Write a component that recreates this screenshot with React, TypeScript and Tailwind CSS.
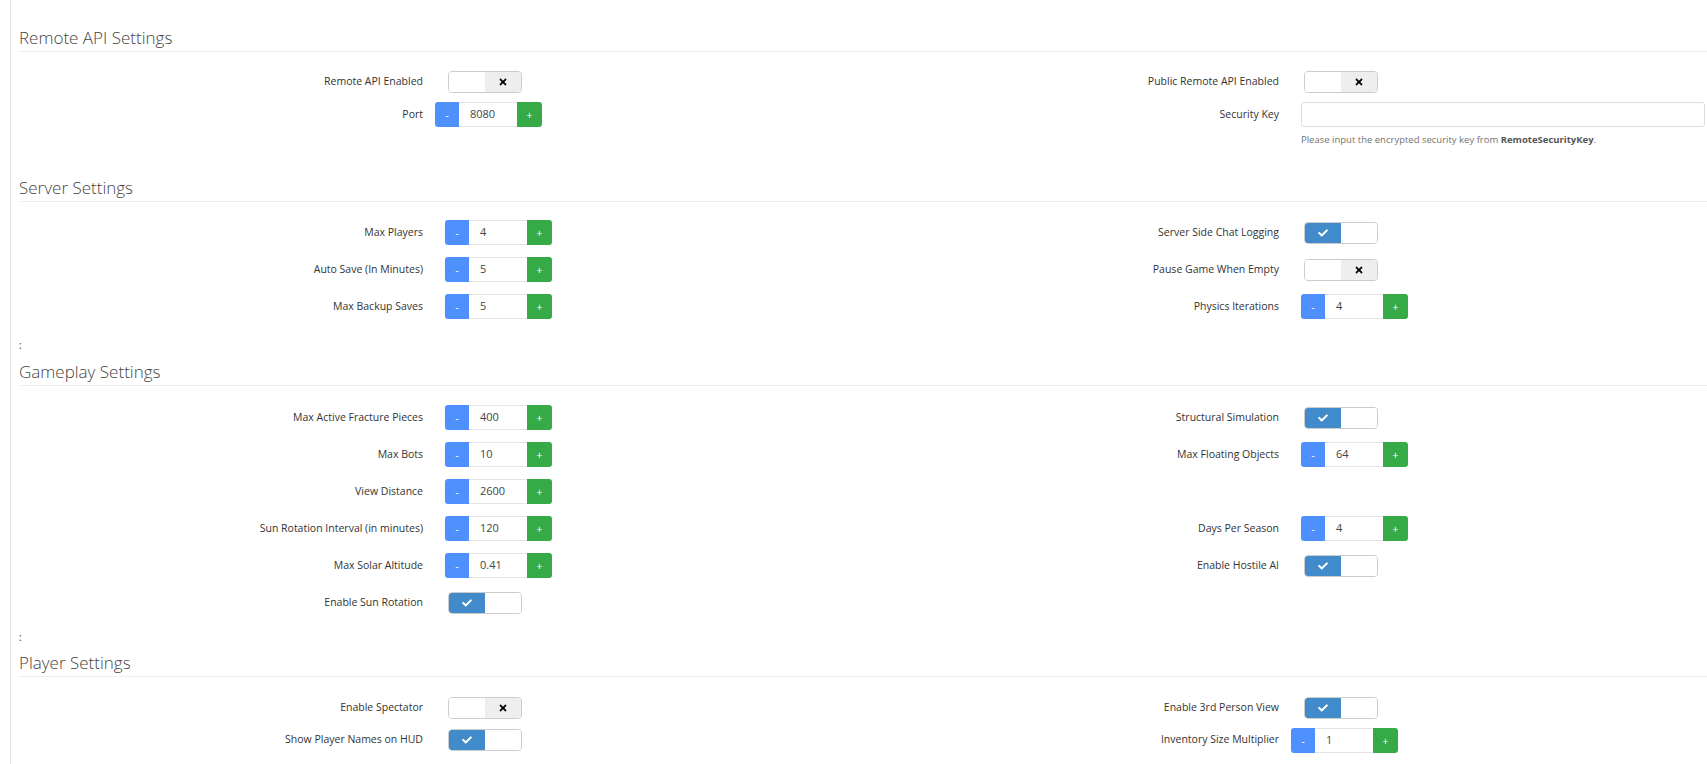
import React from "react";
import { FaCheck, FaTimes } from "react-icons/fa";

type Side = "left" | "right";

function Toggle({ on }: { on: boolean }) {
    return (
        <div className="ml-[25px] flex h-[22px] w-[74px] overflow-hidden rounded-[4px] border border-[#cccccc]">
            {on ? (
                <>
                    <span className="flex w-1/2 items-center justify-center bg-[#428bca] text-white">
                        <FaCheck size={10} />
                    </span>
                    <span className="w-1/2 bg-white" />
                </>
            ) : (
                <>
                    <span className="w-1/2 bg-white" />
                    <span className="flex w-1/2 items-center justify-center bg-[#eeeeee] text-black">
                        <FaTimes size={10} />
                    </span>
                </>
            )}
        </div>
    );
}

function Stepper({ value, compact = false }: { value: string; compact?: boolean }) {
    return (
        <div className={compact ? "ml-[12px] flex h-[25px]" : "ml-[22px] flex h-[25px]"}>
            <button className="w-[24px] rounded-l-[3px] bg-[#4d90fe] text-[11px] leading-none text-white">
                -
            </button>
            <input
                readOnly
                value={value}
                className="w-[58px] border-y border-[#e5e5e5] bg-white pl-[11px] text-[11px] text-[#444444] outline-none"
            />
            <button className="w-[25px] rounded-r-[3px] bg-[#35aa47] text-[11px] leading-none text-white">
                +
            </button>
        </div>
    );
}

function Row({
    label,
    side,
    height,
    children,
}: {
    label?: string;
    side: Side;
    height: string;
    children?: React.ReactNode;
}) {
    return (
        <div className={`flex items-center ${height}`}>
            <label
                className={
                    side === "left"
                        ? "w-[404px] shrink-0 text-right text-[10.5px] text-[#333333]"
                        : "w-[416px] shrink-0 text-right text-[10.5px] text-[#333333]"
                }
            >
                {label}
            </label>
            {children}
        </div>
    );
}

function Heading({ title }: { title: string }) {
    return (
        <h3 className="border-b border-[#eeeeee] pb-[2px] text-[17px] font-light leading-[22px] text-[#444444]">
            {title}
        </h3>
    );
}

export default function App() {
    return (
        <div className="min-h-screen bg-white font-['Open_Sans',sans-serif]">
            <div className="ml-[10px] min-h-[764px] border-l border-[#e5e5e5] pl-[8px] pt-[27px]">
                {/* Remote API */}
                <Heading title="Remote API Settings" />
                <div className="flex pt-[13px]">
                    <div className="w-[844px] shrink-0">
                        <Row side="left" height="h-[33px]" label="Remote API Enabled">
                            <Toggle on={false} />
                        </Row>
                        <Row side="left" height="h-[33px]" label="Port">
                            <Stepper value="8080" compact />
                        </Row>
                    </div>
                    <div className="flex-1">
                        <Row side="right" height="h-[33px]" label="Public Remote API Enabled">
                            <Toggle on={false} />
                        </Row>
                        <Row side="right" height="h-[33px]" label="Security Key">
                            <input
                                readOnly
                                className="ml-[22px] mr-[2px] h-[25px] flex-1 rounded-[3px] border border-[#dddddd] bg-white outline-none"
                            />
                        </Row>
                        <p className="mt-[2px] pl-[438px] text-[9.5px] leading-[13px] text-[#737373]">
                            Please input the encrypted security key from{" "}
                            <b className="font-bold text-[#555555]">RemoteSecurityKey</b>.
                        </p>
                    </div>
                </div>

                {/* Server */}
                <div className="mt-[31px]">
                    <Heading title="Server Settings" />
                </div>
                <div className="flex pt-[12px]">
                    <div className="w-[844px] shrink-0">
                        <Row side="left" height="h-[37px]" label="Max Players">
                            <Stepper value="4" />
                        </Row>
                        <Row side="left" height="h-[37px]" label="Auto Save (In Minutes)">
                            <Stepper value="5" />
                        </Row>
                        <Row side="left" height="h-[37px]" label="Max Backup Saves">
                            <Stepper value="5" />
                        </Row>
                    </div>
                    <div className="flex-1">
                        <Row side="right" height="h-[37px]" label="Server Side Chat Logging">
                            <Toggle on />
                        </Row>
                        <Row side="right" height="h-[37px]" label="Pause Game When Empty">
                            <Toggle on={false} />
                        </Row>
                        <Row side="right" height="h-[37px]" label="Physics Iterations">
                            <Stepper value="4" />
                        </Row>
                    </div>
                </div>
                <p className="mb-[10px] mt-[14px] text-[10px] leading-[12px] text-[#333333]">:</p>

                {/* Gameplay */}
                <Heading title="Gameplay Settings" />
                <div className="flex pt-[13px]">
                    <div className="w-[844px] shrink-0">
                        <Row side="left" height="h-[37px]" label="Max Active Fracture Pieces">
                            <Stepper value="400" />
                        </Row>
                        <Row side="left" height="h-[37px]" label="Max Bots">
                            <Stepper value="10" />
                        </Row>
                        <Row side="left" height="h-[37px]" label="View Distance">
                            <Stepper value="2600" />
                        </Row>
                        <Row side="left" height="h-[37px]" label="Sun Rotation Interval (in minutes)">
                            <Stepper value="120" />
                        </Row>
                        <Row side="left" height="h-[37px]" label="Max Solar Altitude">
                            <Stepper value="0.41" />
                        </Row>
                        <Row side="left" height="h-[37px]" label="Enable Sun Rotation">
                            <Toggle on />
                        </Row>
                    </div>
                    <div className="flex-1">
                        <Row side="right" height="h-[37px]" label="Structural Simulation">
                            <Toggle on />
                        </Row>
                        <Row side="right" height="h-[37px]" label="Max Floating Objects">
                            <Stepper value="64" />
                        </Row>
                        <Row side="right" height="h-[37px]" />
                        <Row side="right" height="h-[37px]" label="Days Per Season">
                            <Stepper value="4" />
                        </Row>
                        <Row side="right" height="h-[37px]" label="Enable Hostile AI">
                            <Toggle on />
                        </Row>
                    </div>
                </div>
                <p className="mb-[9px] mt-[10px] text-[10px] leading-[12px] text-[#333333]">:</p>

                {/* Player */}
                <Heading title="Player Settings" />
                <div className="flex pt-[15px]">
                    <div className="w-[844px] shrink-0">
                        <Row side="left" height="h-[32px]" label="Enable Spectator">
                            <Toggle on={false} />
                        </Row>
                        <Row side="left" height="h-[32px]" label="Show Player Names on HUD">
                            <Toggle on />
                        </Row>
                    </div>
                    <div className="flex-1">
                        <Row side="right" height="h-[32px]" label="Enable 3rd Person View">
                            <Toggle on />
                        </Row>
                        <Row side="right" height="h-[32px]" label="Inventory Size Multiplier">
                            <Stepper value="1" compact />
                        </Row>
                    </div>
                </div>
            </div>
        </div>
    );
}
